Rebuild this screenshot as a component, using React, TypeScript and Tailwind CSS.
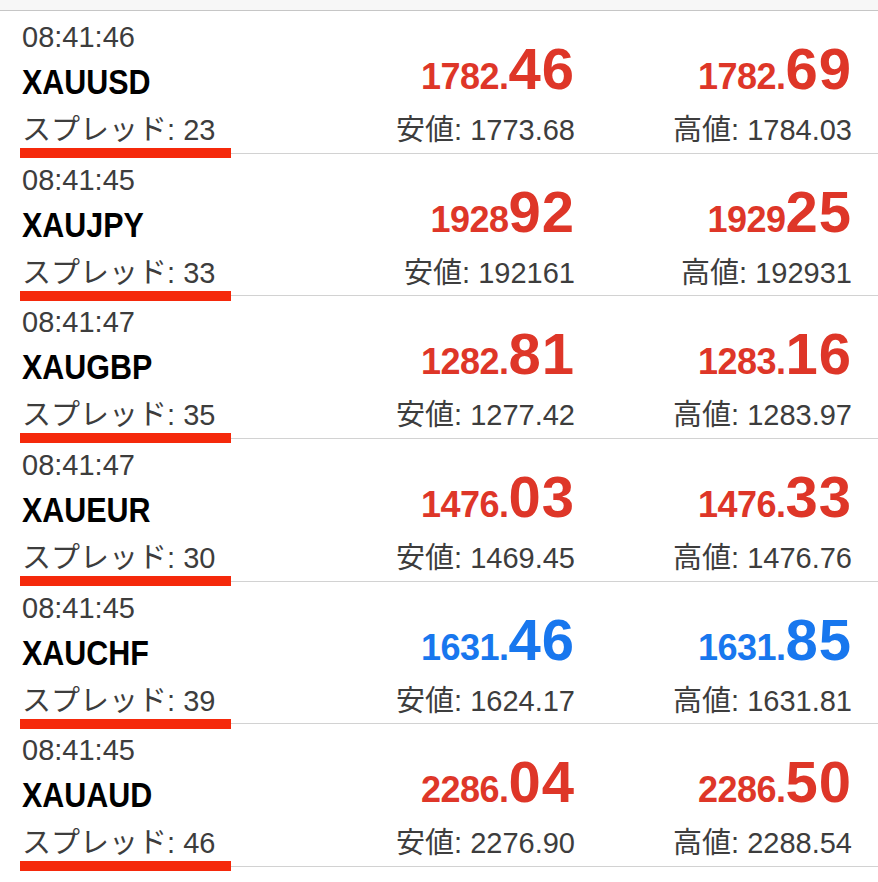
const rows = [
  { time: "08:41:46", symbol: "XAUUSD", spread: 23, bidHead: "1782.", bidTail: "46", askHead: "1782.", askTail: "69", low: "1773.68", high: "1784.03", up: false },
  { time: "08:41:45", symbol: "XAUJPY", spread: 33, bidHead: "1928", bidTail: "92", askHead: "1929", askTail: "25", low: "192161", high: "192931", up: false },
  { time: "08:41:47", symbol: "XAUGBP", spread: 35, bidHead: "1282.", bidTail: "81", askHead: "1283.", askTail: "16", low: "1277.42", high: "1283.97", up: false },
  { time: "08:41:47", symbol: "XAUEUR", spread: 30, bidHead: "1476.", bidTail: "03", askHead: "1476.", askTail: "33", low: "1469.45", high: "1476.76", up: false },
  { time: "08:41:45", symbol: "XAUCHF", spread: 39, bidHead: "1631.", bidTail: "46", askHead: "1631.", askTail: "85", low: "1624.17", high: "1631.81", up: true },
  { time: "08:41:45", symbol: "XAUAUD", spread: 46, bidHead: "2286.", bidTail: "04", askHead: "2286.", askTail: "50", low: "2276.90", high: "2288.54", up: false }
];

const sans = "font-['Liberation_Sans','Noto_Sans_CJK_JP',sans-serif]";

function Price({ head, tail, label, value, up }: { head: string; tail: string; label: string; value: string; up: boolean }) {
  return (
    <div className="flex w-[277px] flex-col items-end">
      <div className={`mt-[23px] h-[70px] text-[58px] font-bold leading-[70px] ${up ? "text-[#1877ee]" : "text-[#de3628]"}`}>
        <span className="text-[36px] leading-none tracking-[-0.5px]">{head}</span>
        <span className="tracking-[1px]">{tail}</span>
      </div>
      <div className="mt-[5px] h-[42px] text-[29px] leading-[42px] text-[#3d3d3d]">
        {label}: {value}
      </div>
    </div>
  );
}

export default function App() {
  return (
    <div className={`min-h-[882px] w-[878px] bg-white ${sans}`}>
      <div className="h-[11px] border-b border-[#c6c6c6] bg-[#f7f7f7]" />
      {rows.map((r) => (
        <div className="h-[142.67px] pl-[20px]" key={r.symbol}>
          <div className="relative flex h-full border-b border-[#d2d2d2] pr-[26px]">
            <div className="flex-1 pl-[2px]">
              <div className="mt-[5px] h-[42px] text-[29px] leading-[42px] text-[#3d3d3d]">{r.time}</div>
              <div className="mt-[2px] h-[44px] origin-left scale-x-[0.87] text-[35px] font-bold leading-[44px] text-black">{r.symbol}</div>
              <div className="mt-[5px] h-[42px] text-[29px] leading-[42px] text-[#3d3d3d]">スプレッド: {r.spread}</div>
            </div>
            <Price head={r.bidHead} tail={r.bidTail} label="安値" value={r.low} up={r.up} />
            <Price head={r.askHead} tail={r.askTail} label="高値" value={r.high} up={r.up} />
            <div className="absolute left-0 top-[137px] z-10 h-[10px] w-[211px] bg-[#f5290b]" />
          </div>
        </div>
      ))}
    </div>
  );
}
